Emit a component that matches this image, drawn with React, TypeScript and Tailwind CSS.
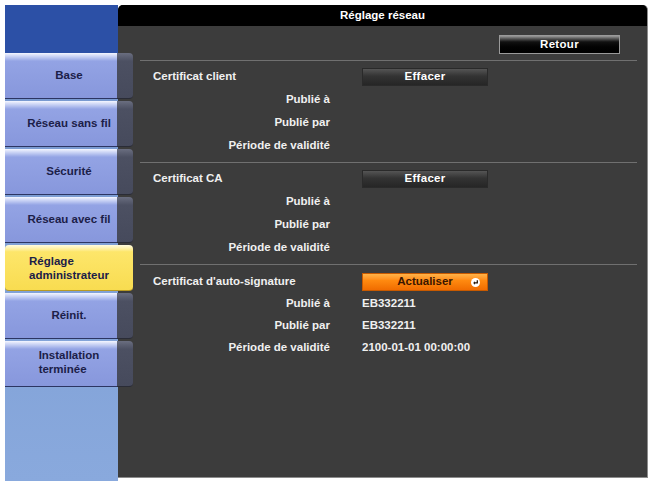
import * as React from 'react';

const FONT = { fontFamily: '"Liberation Sans", Arial, sans-serif' };

const MENU: { label: string[]; active?: boolean }[] = [
  { label: ['Base'] },
  { label: ['Réseau sans fil'] },
  { label: ['Sécurité'] },
  { label: ['Réseau avec fil'] },
  { label: ['Réglage', 'administrateur'], active: true },
  { label: ['Réinit.'] },
  { label: ['Installation', 'terminée'] },
];

interface Section {
  title: string;
  button: 'Effacer' | 'Actualiser';
  values: string[];
}

const SECTIONS: Section[] = [
  { title: 'Certificat client', button: 'Effacer', values: ['', '', ''] },
  { title: 'Certificat CA', button: 'Effacer', values: ['', '', ''] },
  {
    title: "Certificat d'auto-signature",
    button: 'Actualiser',
    values: ['EB332211', 'EB332211', '2100-01-01 00:00:00'],
  },
];

const LABELS = ['Publié à', 'Publié par', 'Période de validité'];

function MenuLabel({ lines }: { lines: string[] }): React.ReactElement {
  if (lines.length === 1) return <span>{lines[0]}</span>;
  return (
    <span className="inline-block text-left leading-[14px]">
      {lines.map((l) => (
        <span key={l} className="block">
          {l}
        </span>
      ))}
    </span>
  );
}

function MenuButton({ label, active }: { label: string[]; active?: boolean }): React.ReactElement {
  if (active) {
    return (
      <div className="w-[128px] h-[46px] mb-[2px] flex items-center justify-center rounded-[4px] border-b border-[#b89a22] bg-gradient-to-b from-[#fffbe0] via-[#fde66a] via-[15%] to-[#f8dc50] text-[11.5px] font-bold text-[#1c2048]">
        <MenuLabel lines={label} />
      </div>
    );
  }
  return (
    <div className="w-[128px] h-[46px] mb-[2px] flex">
      <div className="w-[112px] h-full flex items-center justify-center border-b border-[#2c3562] bg-gradient-to-b from-[#f4f6ff] via-[#93a3e4] via-[18%] to-[#8797dc] text-[11.5px] font-bold text-[#1c2048]">
        <span className="-mr-[16px]">
          <MenuLabel lines={label} />
        </span>
      </div>
      <div className="w-[16px] h-full rounded-r-[4px] border-b border-[#2a2c36] bg-gradient-to-b from-[#6a6e80] via-[#4c5062] via-[18%] to-[#464a5c]" />
    </div>
  );
}

function ActionButton({ kind }: { kind: Section['button'] }): React.ReactElement {
  if (kind === 'Actualiser') {
    return (
      <div className="w-[126px] h-[18px] flex items-center justify-center relative border border-[#c85a00] bg-gradient-to-b from-[#ffb347] via-[#ff8a10] via-[40%] to-[#f06c00] text-[11.5px] font-bold text-[#3a1600]">
        Actualiser
        <svg
          viewBox="0 0 10 10"
          className="absolute right-[7px] top-[4px] w-[9px] h-[9px]"
        >
          <circle cx="5" cy="5" r="5" fill="#ffffff" />
          <path d="M7 2.5 V5.5 H3.6" stroke="#2a1400" strokeWidth="1.4" fill="none" />
          <path d="M4.4 3.6 L2.4 5.5 L4.4 7.4 Z" fill="#2a1400" />
        </svg>
      </div>
    );
  }
  return (
    <div className="w-[126px] h-[18px] flex items-center justify-center border border-[#2a2a2a] bg-gradient-to-b from-[#555555] via-[#333333] via-[45%] to-[#262626] text-[11.5px] font-bold text-white tracking-[0.3px]">
      {kind}
    </div>
  );
}

function CertSection({ section, last }: { section: Section; last: boolean }): React.ReactElement {
  // the last block sits a little tighter than the two above it
  const rowH = last ? 'h-[22px]' : 'h-[23px]';
  return (
    <div className={last ? 'pt-[5px]' : 'pt-[4px] pb-[5px] border-b border-[#707070]'}>
      <div className="h-[23px] flex items-center">
        <div className="w-[190px] pl-[13px] text-[11.5px] font-bold text-[#f0f0f0]">{section.title}</div>
        <div className="ml-[32px]">
          <ActionButton kind={section.button} />
        </div>
      </div>
      {LABELS.map((label, i) => (
        <div key={label} className={`${rowH} flex items-center`}>
          <div className="w-[190px] text-right text-[11.5px] font-bold text-[#f0f0f0]">{label}</div>
          <div className="ml-[32px] text-[11.5px] font-bold text-[#f0f0f0]">{section.values[i]}</div>
        </div>
      ))}
    </div>
  );
}

export default function App(): React.ReactElement {
  return (
    <div className="w-[651px] h-[481px] bg-white pl-[5px] pt-[5px] flex overflow-hidden" style={FONT}>
      <div className="relative z-10 w-[113px] h-[476px] flex flex-col bg-gradient-to-b from-[#7596cd] to-[#89a9dd]">
        <div className="h-[48px] bg-[#2c50a6]" />
        {MENU.map((m) => (
          <MenuButton key={m.label.join(' ')} label={m.label} active={m.active} />
        ))}
      </div>
      <div className="w-[530px] h-[473px] flex flex-col rounded-t-[5px] bg-[#3c3c3c] border-r border-b border-[#8c8c8c]">
        <div className="h-[21px] rounded-t-[5px] bg-black flex items-center justify-center text-[11.5px] font-bold text-white">
          Réglage réseau
        </div>
        <div className="pl-[22px] pr-[10px]">
          <div className="flex justify-end pr-[17px] pt-[9px] pb-[6px] border-b border-[#707070]">
            <div className="w-[121px] h-[19px] flex items-center justify-center border border-[#9a9a9a] bg-gradient-to-b from-[#9a9a9a] via-[#111111] via-[35%] to-black text-[11.5px] font-bold text-white tracking-[0.3px]">
              Retour
            </div>
          </div>
          {SECTIONS.map((s, i) => (
            <CertSection key={s.title} section={s} last={i === SECTIONS.length - 1} />
          ))}
        </div>
      </div>
    </div>
  );
}
